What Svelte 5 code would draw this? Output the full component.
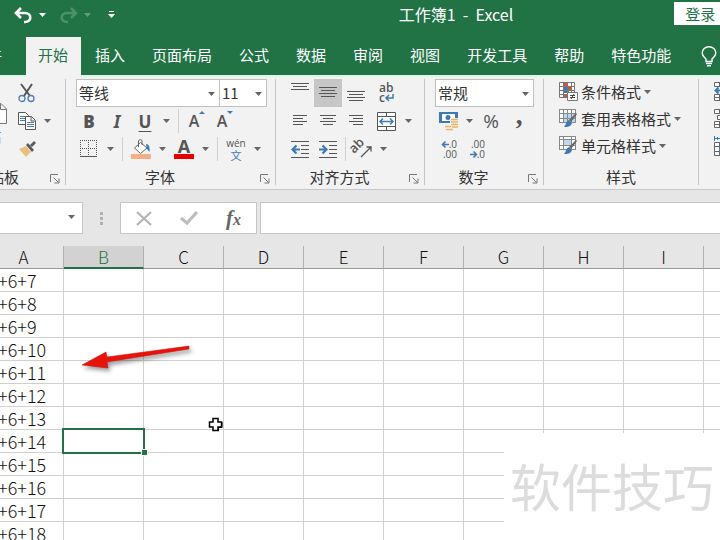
<script>
    let tabs = ["开始", "插入", "页面布局", "公式", "数据", "审阅", "视图", "开发工具", "帮助", "特色功能"];
    let currentTab = $state(0);
    let align = $state("middle");

    const columns = ["A", "B", "C", "D", "E", "F", "G", "H", "I", "J", "K", "L"];
    const rows = Array.from({ length: 12 }, (_, i) => `+6+${i + 7}`);
    const selected = { row: 7, col: 1 };

    // Line icons: [x, y, width]
    const vertical = [
        { id: "top", label: "顶端对齐", lines: [[0, 0, 18], [2, 3, 14], [0, 6, 18]], dy: 0 },
        { id: "middle", label: "垂直居中", lines: [[0, 0, 18], [2, 3, 14], [0, 6, 18], [2, 9, 14]], dy: 4 },
        { id: "bottom", label: "底端对齐", lines: [[0, 0, 18], [2, 3, 14], [0, 6, 18], [2, 9, 14]], dy: 8 },
    ];
    const horizontal = [
        { label: "左对齐", lines: [[2, 0, 14], [2, 3, 10], [2, 6, 14], [2, 9, 10]] },
        { label: "居中", lines: [[1, 0, 16], [4, 3, 10], [1, 6, 16], [4, 9, 10]] },
        { label: "右对齐", lines: [[2, 0, 14], [6, 3, 10], [2, 6, 14], [6, 9, 10]] },
    ];
</script>

{#snippet caret()}
    <svg class="caret" width="7" height="4" viewBox="0 0 7 4"><path d="M0 0h7L3.5 4z" /></svg>
{/snippet}

{#snippet drop(label)}
    <button class="drop" aria-label={label}>{@render caret()}</button>
{/snippet}

{#snippet launcher(label)}
    <button class="launcher" aria-label={label}>
        <svg width="10" height="10" viewBox="0 0 10 10" fill="none" stroke="#777">
            <path d="M.5 8V.5H8M3.5 3.5l5 5M9 4.5V9H4.5" />
        </svg>
    </button>
{/snippet}

{#snippet lines(list, dy)}
    <svg width="18" height="20" viewBox="0 0 18 20" shape-rendering="crispEdges">
        {#each list as [x, y, w]}
            <rect {x} y={y + dy} width={w} height="1" fill="#555" />
        {/each}
    </svg>
{/snippet}

{#snippet brush()}
    <path d="M18 5 12 13l-2-2 7-7z" fill="#666" />
    <path d="M10 11l3 3c-1 4-5 4-8 4 2-2 2-6 5-7z" fill="#3d7ab5" />
{/snippet}

<div class="app">
    <header>
        <div class="titlebar">
            <div class="quick">
                <button class="undo" aria-label="撤消">
                    <svg width="19" height="17" viewBox="0 0 19 17" fill="none" stroke="#fff" stroke-width="2.6">
                        <path d="M7 1 2 6l5 5M2 6h9c7 0 7 9 0 9h-1" />
                    </svg>
                </button>
                <button aria-label="撤消列表">{@render caret()}</button>
                <button class="redo" aria-label="恢复">
                    <svg width="19" height="17" viewBox="0 0 19 17" fill="none" stroke="currentColor" stroke-width="2.6">
                        <path d="m12 1 5 5-5 5M17 6H8c-7 0-7 9 0 9h1" />
                    </svg>
                </button>
                <button class="faded" aria-label="恢复列表">{@render caret()}</button>
                <button class="custom" aria-label="自定义快速访问工具栏">
                    <svg width="7" height="8" viewBox="0 0 7 8" fill="#fff"><path d="M1 0h5v1H1zM0 3h7L3.5 7z" /></svg>
                </button>
            </div>
            <h1>工作簿1&nbsp; -&nbsp; Excel</h1>
            <button class="login">登录</button>
        </div>
        <nav>
            <button class="tab file">文件</button>
            {#each tabs as tab, index}
                <button class="tab" class:selected={currentTab === index} onclick={() => (currentTab = index)}>{tab}</button>
            {/each}
            <button class="bulb" aria-label="操作说明搜索">
                <svg width="16" height="21" viewBox="0 0 16 21" fill="none" stroke="#fff" stroke-width="1.4">
                    <path d="M5 15.5V13C3 11 1.200 10 1.200 7a6.800 6.300 0 0 1 13.600 0c0 3-1.800 4-3.800 6v2.500zM5 17.500h6M6 19.700h4" />
                </svg>
            </button>
        </nav>
    </header>

    <section class="ribbon">
        <div class="group clipboard">
            <div class="body columns">
                <button class="paste">
                    <svg width="40" height="44" viewBox="0 0 40 44" fill="none" stroke="#777">
                        <path d="M4 5h24v12M4 5v34h14" stroke="#d9a441" stroke-width="2" />
                        <path d="M20.500 21.500H35l5.500 5.500v14.500h-20zM34.500 21.500v6h6" fill="#fff" />
                    </svg>
                    粘贴
                </button>
                <div class="stack">
                    <div class="row">
                        <button class="tool" aria-label="剪切">
                            <svg width="18" height="20" viewBox="0 0 18 20" fill="none">
                                <path d="M3 1l9 12M14 1 6 13" stroke="#555" stroke-width="2" />
                                <circle cx="4" cy="15.500" r="3" stroke="#4a7db5" stroke-width="1.300" />
                                <circle cx="13" cy="15.500" r="3" stroke="#4a7db5" stroke-width="1.300" />
                            </svg>
                        </button>
                    </div>
                    <div class="row">
                        <button class="tool" aria-label="复制">
                            <svg width="18" height="18" viewBox="0 0 18 18" fill="#fff" stroke="#555">
                                <path d="M.5.5h7l3 3v9H.5z" />
                                <path d="M2 4.500h5M2 6.500h5M2 8.500h5" stroke="#4a7db5" />
                                <path d="M7.500 4.500h6l4 4v9h-10zM13 5v4h4" />
                                <path d="M9 10.500h7M9 12.500h7M9 14.500h7" stroke="#4a7db5" />
                            </svg>
                        </button>
                        {@render drop("复制选项")}
                    </div>
                    <div class="row">
                        <button class="tool" aria-label="格式刷">
                            <svg width="18" height="16" viewBox="0 0 18 16">
                                <path d="M1 8 8 5l5 6-5 5z" fill="#ecc07c" />
                                <path d="m8 4 2-2 6 7-2 2zM12 4l4-4 2 2-4 4z" fill="#5c5c5c" />
                            </svg>
                        </button>
                    </div>
                </div>
            </div>
            <div class="caption"><span>剪贴板</span>{@render launcher("剪贴板设置")}</div>
        </div>

        <div class="group font">
            <div class="body">
                <div class="row">
                    <label class="combo family"><select aria-label="字体"><option>等线</option></select>{@render caret()}</label>
                    <label class="combo size"><select aria-label="字号"><option>11</option></select>{@render caret()}</label>
                </div>
                <div class="row spaced">
                    <button class="tool letter"><b>B</b></button>
                    <button class="tool letter italic">I</button>
                    <button class="tool letter under">U</button>
                    {@render drop("下划线选项")}
                    <i class="sep"></i>
                    <button class="tool grow" aria-label="增大字号">
                        <span>A</span><svg width="6" height="3" viewBox="0 0 6 3"><path d="M0 3 3 0 6 3z" fill="#3d7ab5" /></svg>
                    </button>
                    <button class="tool grow" aria-label="减小字号">
                        <span>A</span><svg width="6" height="3" viewBox="0 0 6 3"><path d="M0 0h6L3 3z" fill="#3d7ab5" /></svg>
                    </button>
                </div>
                <div class="row spaced">
                    <button class="tool" aria-label="边框">
                        <svg width="18" height="18" viewBox="0 0 18 18" fill="none" stroke="#555">
                            <path d="M.5 0v16M8.500 0v16M16.500 0v16M0 .5h17M0 8.500h17" stroke-dasharray="1 1" />
                            <path d="M0 16.500h17" />
                        </svg>
                    </button>
                    {@render drop("边框选项")}
                    <i class="sep"></i>
                    <button class="tool" aria-label="填充颜色">
                        <svg width="20" height="20" viewBox="0 0 20 20">
                            <path d="M9.500 3.500 16 9l-6.500 5.500L3.500 9z" fill="#fff" stroke="#666" />
                            <path d="M7.500 8V1.500Q9.500-.5 11 1.500V6" fill="none" stroke="#666" />
                            <path d="M15 5c3 0 4 3 3.500 8l-2.500-3z" fill="#3d7ab5" />
                            <path d="M0 15h20v5H0z" fill="#f4b084" />
                        </svg>
                    </button>
                    {@render drop("填充颜色选项")}
                    <button class="tool color">A</button>
                    {@render drop("字体颜色选项")}
                    <i class="sep"></i>
                    <button class="tool phonetic"><span>wén</span><em>文</em></button>
                    {@render drop("拼音选项")}
                </div>
            </div>
            <div class="caption"><span>字体</span>{@render launcher("字体设置")}</div>
        </div>

        <div class="group alignment">
            <div class="body">
                <div class="row">
                    {#each vertical as item}
                        <button class="tool" class:on={align === item.id} aria-label={item.label} onclick={() => (align = item.id)}>
                            {@render lines(item.lines, item.dy)}
                        </button>
                    {/each}
                    <button class="tool wide wrap" aria-label="自动换行">
                        <span>ab</span>
                        <span>c<svg width="9" height="8" viewBox="0 0 9 8" fill="none" stroke="#3d7ab5" stroke-width="1.500"><path d="M8 0v4H1M4 1 1 4l3 3" /></svg></span>
                    </button>
                </div>
                <div class="row">
                    {#each horizontal as item}
                        <button class="tool" aria-label={item.label}>{@render lines(item.lines, 4)}</button>
                    {/each}
                    <button class="tool wide" aria-label="合并后居中">
                        <svg width="19" height="19" viewBox="0 0 19 19" fill="#fff" stroke="#555">
                            <path d="M.5.5h18v18H.5zM.5 4.500h18M.5 14.500h18M9.500.5v4M9.500 14.500v4" />
                            <path d="M3 9.500h13M6 6.500l-3 3 3 3M13 6.500l3 3-3 3" fill="none" stroke="#3d7ab5" stroke-width="1.500" />
                        </svg>
                    </button>
                    {@render drop("合并选项")}
                </div>
                <div class="row">
                    <button class="tool" aria-label="减少缩进量">
                        <svg width="18" height="17" viewBox="0 0 18 17" stroke="#555" fill="none">
                            <path d="M0 .5h18M10 4.500h8M10 8.500h8M10 12.500h8M0 16.500h18" />
                            <path d="M9 8.500H2M5.500 4.500l-4 4 4 4" stroke="#3d7ab5" stroke-width="2.200" />
                        </svg>
                    </button>
                    <button class="tool" aria-label="增加缩进量">
                        <svg width="18" height="17" viewBox="0 0 18 17" stroke="#555" fill="none">
                            <path d="M0 .5h18M10 4.500h8M10 8.500h8M10 12.500h8M0 16.500h18" />
                            <path d="M0 8.500h7M3.500 4.500l4 4-4 4" stroke="#3d7ab5" stroke-width="2.200" />
                        </svg>
                    </button>
                    <i class="sep"></i>
                    <button class="tool" aria-label="方向">
                        <svg width="20" height="18" viewBox="0 0 20 18" fill="none" stroke="#555">
                            <text x="0" y="12" transform="rotate(-45 3 12)" font-family="Open Sans, sans-serif" font-size="13" font-weight="600" fill="#555" stroke="none">ab</text>
                            <path d="M8 17 18 7M13.500 7H18v4.500" stroke-width="1.300" />
                        </svg>
                    </button>
                    {@render drop("方向选项")}
                </div>
            </div>
            <div class="caption"><span>对齐方式</span>{@render launcher("对齐设置")}</div>
        </div>

        <div class="group number">
            <div class="body">
                <div class="row">
                    <label class="combo format"><select aria-label="数字格式"><option>常规</option></select>{@render caret()}</label>
                </div>
                <div class="row">
                    <button class="tool" aria-label="会计数字格式">
                        <svg width="20" height="20" viewBox="0 0 20 20">
                            <path d="M0 1h19v11H0z" fill="#3d7ab5" />
                            <path d="M3 3h13v7H3z" fill="#fff" />
                            <circle cx="9" cy="6.500" r="2.500" fill="#3d7ab5" />
                            <path d="M11 7h9v13H5v-6h6z" fill="#f2f2f2" />
                            <path d="M12 8.500h7M12 11h7M12 13.500h7M6 15.500h6M7 18.500h7M13 16h6" stroke="#e6b566" stroke-width="1.600" />
                        </svg>
                    </button>
                    {@render drop("会计格式选项")}
                    <button class="tool percent">%</button>
                    <button class="tool comma">,</button>
                </div>
                <div class="row">
                    <button class="tool decimal" aria-label="增加小数位数">
                        <span><svg width="7" height="7" viewBox="0 0 7 7" fill="none" stroke="#3d7ab5" stroke-width="1.600"><path d="M7 3.500H1M3.500.5l-3 3 3 3" /></svg>.0</span>
                        <span>.00</span>
                    </button>
                    <button class="tool decimal" aria-label="减少小数位数">
                        <span>.00</span>
                        <span><svg width="7" height="7" viewBox="0 0 7 7" fill="none" stroke="#3d7ab5" stroke-width="1.600"><path d="M0 3.500h6M3.500.5l3 3-3 3" /></svg>.0</span>
                    </button>
                </div>
            </div>
            <div class="caption"><span>数字</span>{@render launcher("数字设置")}</div>
        </div>

        <div class="group styles">
            <div class="body">
                <button class="style">
                    <svg width="19" height="20" viewBox="0 0 19 20" fill="none" stroke="#777">
                        <path d="M.5.500h15v15H.5z" fill="#fff" />
                        <path d="M4 1h4v4H4zM8 5h4v4H8z" fill="#d9532c" stroke="none" />
                        <path d="M4 5h4v3H4zM4 8h6v3H4z" fill="#3d7ab5" stroke="none" />
                        <path d="M4 12h4v3H4z" fill="#d9532c" stroke="none" />
                        <path d="M4.500 0v16M8.500 0v16M12.500 0v16M0 4.500h16M0 8.500h16M0 12.500h16" />
                        <path d="M8.500 10.500h10v8h-10z" fill="#fff" />
                        <path d="M11 13.500h5M11 15.500h5M15 12l-3 5" stroke="#444" />
                    </svg>
                    条件格式{@render caret()}
                </button>
                <button class="style">
                    <svg width="19" height="19" viewBox="0 0 19 19" fill="none" stroke="#888">
                        <path d="M.5.5h16v13H.5z" fill="#fff" />
                        <path d="M5 5h12v9H5z" fill="#bdd7ee" stroke="none" />
                        <path d="M.5.5h16v13H.5zM4.500 0v14M8.500 0v14M12.500 0v14M0 4.500h17M0 9.500h17" />
                        <g stroke="none">{@render brush()}</g>
                    </svg>
                    套用表格格式{@render caret()}
                </button>
                <button class="style">
                    <svg width="19" height="19" viewBox="0 0 19 19" fill="none" stroke="#888">
                        <path d="M.5.5h16v13H.5z" fill="#fff" />
                        <path d="M5 4h8v6H5z" fill="#bdd7ee" stroke="none" />
                        <path d="M.5.5h16v13H.5zM4.500 0v14M12.500 0v14M0 3.500h17M0 9.500h17" />
                        <g stroke="none">{@render brush()}</g>
                    </svg>
                    单元格样式{@render caret()}
                </button>
            </div>
            <div class="caption"><span>样式</span></div>
        </div>

        <div class="group cells">
            <div class="body">
                <button class="style" aria-label="插入单元格">
                    <svg width="18" height="19" viewBox="0 0 18 19" fill="#fff" stroke="#666">
                        <path d="M.5.5h16v4H.5zM5.500.5v4M.5 12.500h16v6H.5zM5.500 12.500v6M.5 15.500h16M8.500 6.500h8v4h-8z" />
                        <path d="M8 8.500H1M4.500 5.500l-3 3 3 3" fill="none" stroke="#3d7ab5" stroke-width="2" />
                    </svg>
                </button>
                <button class="style" aria-label="删除单元格">
                    <svg width="18" height="19" viewBox="0 0 18 19" fill="#fff" stroke="#666">
                        <path d="M.5.5h16v4H.5zM5.500.5v4M3.500 6.500h10v4h-10zM.5 12.500h16v6H.5zM5.500 12.500v6M.5 15.500h16" />
                        <path d="m9 7 7 7M16 7l-7 7" stroke="#d9532c" stroke-width="2" />
                    </svg>
                </button>
                <button class="style" aria-label="单元格格式">
                    <svg width="18" height="20" viewBox="0 0 18 20" fill="#fff" stroke="#666">
                        <path d="M.5 0v5M0 2.500h17M3.500 1v3" stroke="#3d7ab5" />
                        <path d="M.5 6.500h16v13H.5zM5.500 6.500v13M.5 10.500h16M.5 15.500h16" />
                        <path d="M5 10h7v5H5z" fill="#3d7ab5" stroke="none" />
                    </svg>
                </button>
            </div>
        </div>
    </section>

    <section class="formula">
        <div class="namebox">
            <input aria-label="名称框" />
            {@render drop("名称列表")}
        </div>
        <span class="dots"><i></i><i></i><i></i></span>
        <div class="actions">
            <button aria-label="取消">
                <svg width="16" height="15" viewBox="0 0 16 15" stroke="#b5b5b5" stroke-width="2.200"><path d="m1 1 14 13M15 1 1 14" /></svg>
            </button>
            <button aria-label="输入">
                <svg width="18" height="14" viewBox="0 0 18 14" fill="none" stroke="#bdbdbd" stroke-width="3.200"><path d="m1 7 6 5L17 1" /></svg>
            </button>
            <button class="fx" aria-label="插入函数">f<small>x</small></button>
        </div>
        <input class="content" aria-label="编辑栏" />
    </section>

    <main>
        <table>
            <thead>
                <tr>
                    {#each columns as name, c}
                        <th class:current={c === selected.col}>{name}</th>
                    {/each}
                </tr>
            </thead>
            <tbody>
                {#each rows as text, r}
                    <tr>
                        {#each columns as _, c}
                            <td>
                                {#if c === 0}{text}{/if}
                                {#if r === selected.row && c === selected.col}<span class="cursor"></span>{/if}
                            </td>
                        {/each}
                    </tr>
                {/each}
            </tbody>
        </table>

        <svg class="arrow" width="120" height="36" viewBox="0 0 120 36">
            <path d="M112 5 30 16l-1-5L5 24l26 3-1-6 82-13z" fill="#e8140c" stroke="#c01008" stroke-width=".5" />
        </svg>
        <svg class="pointer" width="15" height="15" viewBox="0 0 15 15">
            <path d="M5 1.500h5v3.500h3.500v5H10v3.500H5V10H1.500V5H5z" fill="#fff" stroke="#000" stroke-width="1.500" />
            <path d="M10.500 14V10.500H14V5" fill="none" stroke="#000" />
        </svg>
        <div class="mark">软件技巧</div>
    </main>
</div>

<style>
    :global(body) {
        overflow: hidden;
    }

    .app {
        display: flex;
        flex-direction: column;
        height: 100vh;
        overflow: hidden;
        background: #fff;
        color: #333;
        font: 15px/20px "Noto Sans CJK SC", sans-serif;
    }

    button,
    input,
    select {
        box-sizing: border-box;
        margin: 0;
        padding: 0;
        border: none;
        border-radius: 0;
        background: none;
        color: inherit;
        font: inherit;
    }

    button {
        display: flex;
        align-items: center;
        justify-content: center;
        flex-shrink: 0;
        white-space: nowrap;
    }

    svg {
        display: block;
        flex-shrink: 0;
        overflow: visible;
    }

    .caret {
        fill: #666;
    }

    /* Title bar and tabs */
    header {
        background: #217346;
        color: #fff;
    }

    .titlebar {
        display: grid;
        grid-template-columns: 1fr auto 1fr;
        height: 37px;
        margin-right: -192px;
    }

    .quick {
        display: flex;
        align-items: center;
        height: 30px;
        padding-left: 14px;
        gap: 6px;
    }

    .quick .caret {
        fill: #fff;
    }

    .quick .redo,
    .quick .faded {
        color: #4d9069;
        margin-left: 7px;
    }

    .quick .faded {
        margin-left: 0;
        opacity: 0.3;
    }

    .quick .custom {
        margin-left: 11px;
    }

    h1 {
        margin: 0;
        font-size: 16px;
        font-weight: 400;
        line-height: 28px;
    }

    .login {
        justify-self: start;
        height: 23px;
        margin: 2px 0 0 161px;
        padding: 0 11px;
        background: #fff;
        color: #217346;
    }

    nav {
        display: flex;
        gap: 2px;
        height: 38px;
        margin-left: -40px;
    }

    .tab {
        padding: 0 13px 2px 12px;
    }

    .tab.file {
        padding-right: 22px;
    }

    .tab.selected {
        position: relative;
        margin-bottom: -2px;
        padding-bottom: 4px;
        background: #f2f2f2;
        color: #217346;
    }

    .bulb {
        margin-left: 15px;
    }

    /* Ribbon */
    .ribbon {
        display: flex;
        flex-shrink: 0;
        padding: 2px 0 4px;
        border-top: 2px solid #dcf7e6;
        border-bottom: 1px solid #c8c8c8;
        background: #f2f2f2;
        overflow: hidden;
    }

    .group {
        box-sizing: border-box;
        flex-shrink: 0;
        border-right: 1px solid #c4c4c4;
    }

    .clipboard {
        width: 117px;
        margin-left: -51px;
    }

    .font {
        width: 210px;
    }

    .alignment {
        width: 149px;
    }

    .number {
        width: 119px;
    }

    .styles {
        width: 155px;
    }

    .body {
        padding-left: 10px;
    }

    .columns {
        display: flex;
    }

    .paste {
        flex-direction: column;
        justify-content: flex-end;
        width: 54px;
        height: 67px;
    }

    .row {
        display: flex;
        align-items: center;
        height: 28px;
    }

    .spaced {
        gap: 2px;
    }

    .tool {
        width: 28px;
        height: 28px;
        color: #555;
    }

    .spaced .tool {
        width: 26px;
    }

    .tool.wide {
        width: 32px;
    }

    .tool.on {
        background: #c6c6c6;
    }

    .drop {
        width: 13px;
        height: 28px;
    }

    .sep {
        width: 1px;
        height: 24px;
        margin: 0 3px;
        background: #d0d0d0;
    }

    .combo {
        position: relative;
        box-sizing: border-box;
        height: 28px;
        border: 1px solid #c0c0c0;
        background: #fff;
    }

    .combo select {
        width: 100%;
        height: 100%;
        padding-left: 2px;
        appearance: none;
    }

    .combo .caret {
        position: absolute;
        top: 12px;
        right: 4px;
        pointer-events: none;
    }

    .family {
        width: 144px;
    }

    .size {
        width: 47px;
        border-left: none;
    }

    .format {
        width: 99px;
    }

    .letter {
        font: 700 17px "Open Sans", sans-serif;
    }

    .italic {
        font-family: "Noto Sans", sans-serif;
        font-style: italic;
    }

    .under {
        text-decoration: underline;
        text-decoration-thickness: 1px;
        text-underline-offset: 3px;
    }

    .grow {
        align-items: flex-start;
        padding-top: 4px;
        font: 600 16px/20px "Open Sans", sans-serif;
    }

    .spaced .color {
        height: 20px;
        width: 20px;
        margin: 0 3px;
        border-bottom: 5px solid #e60000;
        font: 700 18px/15px "Open Sans", sans-serif;
    }

    .phonetic {
        flex-direction: column;
        font: 10px/12px "Open Sans", sans-serif;
    }

    .phonetic em {
        color: #3d7ab5;
        font: 11px/12px "Noto Sans CJK SC", sans-serif;
    }

    .wrap {
        flex-direction: column;
        align-items: flex-start;
        padding-left: 9px;
        font: 600 12px/10px "Open Sans", sans-serif;
    }

    .wrap span,
    .decimal span {
        display: flex;
        align-items: center;
    }

    .percent {
        width: 30px;
        font: 19px "Open Sans", sans-serif;
    }

    .comma {
        width: 26px;
        padding-bottom: 12px;
        font: 700 27px/16px "Liberation Serif", serif;
    }

    .decimal {
        flex-direction: column;
        align-items: flex-end;
        padding-right: 6px;
        font: 10px/10px "Open Sans", sans-serif;
    }

    .style {
        gap: 3px;
        height: 27px;
    }

    .styles .body,
    .cells .body {
        height: 84px;
        padding-left: 15px;
    }

    .styles .style,
    .cells .style {
        padding-bottom: 2px;
    }

    .caption {
        display: flex;
        height: 16px;
        margin-top: 6px;
        padding-right: 5px;
        line-height: 16px;
    }

    .caption span {
        flex: 1;
        padding-right: 6px;
        text-align: center;
    }

    .styles .caption {
        padding-right: 0;
    }

    .styles .caption span {
        padding-right: 0;
    }

    .launcher {
        height: 20px;
    }

    /* Formula bar */
    .formula {
        display: flex;
        flex-shrink: 0;
        padding: 12px 0;
        background: #e6e6e6;
    }

    .namebox,
    .actions,
    .content {
        display: flex;
        box-sizing: border-box;
        height: 32px;
        border: 1px solid #c6c6c6;
        background: #fff;
    }

    .namebox {
        width: 83px;
        border-left: none;
        padding-right: 4px;
    }

    .namebox input {
        flex: 1;
        min-width: 0;
    }

    .dots {
        display: flex;
        flex-direction: column;
        justify-content: center;
        align-items: center;
        gap: 2px;
        width: 37px;
    }

    .dots i {
        width: 3px;
        height: 3px;
        background: #b0b0b0;
    }

    .actions {
        width: 137px;
    }

    .actions button {
        flex: 1;
    }

    .fx {
        color: #666;
        font: italic 700 21px/28px "Liberation Serif", serif;
    }

    .fx small {
        padding-top: 4px;
        font-size: 16px;
    }

    .content {
        flex: 1;
        margin-left: 3px;
        border-right: none;
    }

    /* Sheet */
    main {
        position: relative;
        flex: 1;
        min-height: 0;
        overflow: hidden;
    }

    table {
        width: 960px;
        margin-left: -16px;
        border-collapse: separate;
        border-spacing: 0;
        table-layout: fixed;
        color: #111;
        font-size: 18px;
        line-height: 22px;
    }

    th,
    td {
        box-sizing: border-box;
        height: 23px;
        padding: 0;
        border-right: 1px solid #d0d0d0;
        border-bottom: 1px solid #d0d0d0;
        font-weight: 300;
    }

    th {
        border-color: #b0b0b0;
        border-bottom-color: #999;
        background: #e6e6e6;
        font-size: 17px;
    }

    th.current {
        border-bottom: 2px solid #217346;
        background: #d2d2d2;
        color: #217346;
        line-height: 21px;
    }

    td {
        position: relative;
        padding-left: 14px;
        white-space: nowrap;
    }

    .cursor {
        position: absolute;
        z-index: 1;
        inset: -2px;
        border: 2px solid #217346;
    }

    .cursor::after {
        content: "";
        position: absolute;
        right: -5px;
        bottom: -4px;
        width: 5px;
        height: 5px;
        border: 1px solid #fff;
        background: #217346;
    }

    .arrow {
        position: absolute;
        top: 95px;
        left: 77px;
        filter: drop-shadow(2px 3px 2px rgba(0, 0, 0, 0.4));
    }

    .pointer {
        position: absolute;
        top: 171px;
        left: 208px;
    }

    .mark {
        position: absolute;
        z-index: 2;
        right: 0;
        bottom: 0;
        box-sizing: border-box;
        width: 216px;
        height: 107px;
        padding-left: 6px;
        background: #fff;
        color: #dcdcdc;
        font-size: 51px;
        line-height: 104px;
        white-space: nowrap;
    }
</style>
